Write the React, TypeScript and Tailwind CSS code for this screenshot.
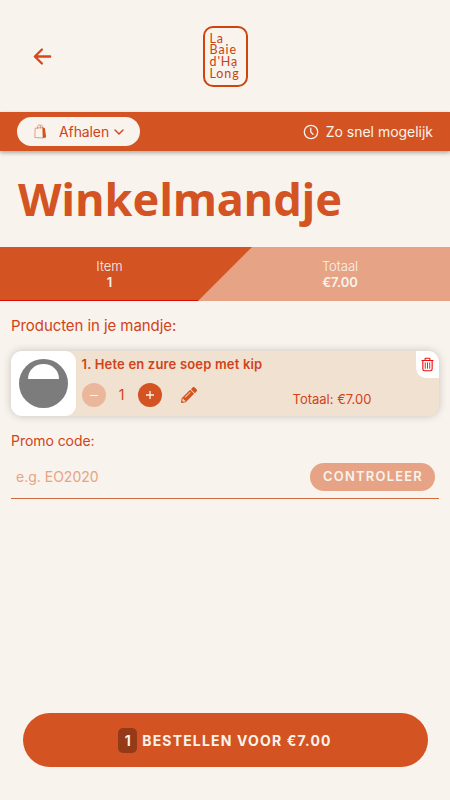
import { useState } from 'react';
import { IoArrowBack } from 'react-icons/io5';
import { FaPencilAlt } from 'react-icons/fa';

const formatPrice = (value: number) => `€${value.toFixed(2)}`;

function Logo() {
  return (
    <div className="w-[45px] h-[61px] rounded-[10px] border-2 border-[#cd440c] pl-[5px] pt-[5px] font-['Lato',sans-serif] text-[12.5px] leading-[11.9px] tracking-[0.9px] text-[#c9430f] whitespace-pre-line">
      {"La\nBaie\nd'Hạ\nLong"}
    </div>
  );
}

function BagIcon() {
  return (
    <svg className="w-[13px] h-[15px]" viewBox="0 0 13 15" fill="none">
      <path d="M1.2 4.2L9 3.5V14L0.8 13.5Z" stroke="#d98a6c" strokeWidth={0.8} />
      <path d="M8.5 3.5L10.8 4L12.2 13.2L9 14.2Z" fill="#d4511f" />
      <path d="M3.6 5V3C3.6 0.6 6.2 0.2 6.6 2.8V4.6M6 2C6.6 0.2 8.8 0.8 8.8 3.4" stroke="#d98a6c" strokeWidth={0.8} />
    </svg>
  );
}

function ClockIcon() {
  return (
    <svg className="w-4 h-4" viewBox="0 0 16 16" fill="none" stroke="currentColor" strokeWidth={1.3} strokeLinecap="round" strokeLinejoin="round">
      <circle cx="8" cy="8" r="6.7" />
      <path d="M7.8 4.2V8L10 10.2" />
    </svg>
  );
}

function TrashIcon() {
  return (
    <svg className="w-[13px] h-[15px]" viewBox="0 0 14 15" fill="none" stroke="#f20d0d" strokeWidth={1.2} strokeLinecap="round">
      <path d="M1 3.2H13M4.4 3V1.6C4.4 1.1 4.7 0.8 5.2 0.8H8.8C9.3 0.8 9.6 1.1 9.6 1.6V3" />
      <path d="M2 3.4V12.4C2 13.5 2.6 14.2 3.7 14.2H10.3C11.4 14.2 12 13.5 12 12.4V3.4" />
      <path d="M4.6 5.7V11.6M7 5.7V11.6M9.4 5.7V11.6" strokeWidth={1} />
    </svg>
  );
}

export default function App() {
  const [count, setCount] = useState(1);
  const [promo, setPromo] = useState('');
  const total = formatPrice(count * 7);

  return (
    <div className="flex flex-col w-full h-screen overflow-hidden bg-[#f8f3ec] text-[#d1431a] font-['Inter',sans-serif]">
      <header className="grid grid-cols-3 items-center h-28 shrink-0">
        <button className="ml-[30px] w-fit text-[#d4481a]">
          <IoArrowBack className="w-[25px] h-[25px]" />
        </button>
        <div className="justify-self-center">
          <Logo />
        </div>
      </header>

      <div className="flex items-center justify-between h-[39px] shrink-0 bg-[#d45322] px-[17px] shadow-[0_2px_4px_rgba(0,0,0,0.3)]">
        <button className="flex items-center h-[29px] w-[123px] rounded-full bg-[#f8f3ec] pl-[17px]">
          <BagIcon />
          <span className="ml-3 text-sm tracking-[-0.1px]">Afhalen</span>
          <svg className="ml-[5px] w-[10px] h-[6px]" viewBox="0 0 10 6" fill="none" stroke="currentColor" strokeWidth={1.4} strokeLinecap="round" strokeLinejoin="round">
            <path d="M1 1L5 5L9 1" />
          </svg>
        </button>
        <div className="flex items-center gap-[7px] text-[#f8f3ec]">
          <ClockIcon />
          <span className="text-sm tracking-[-0.02px]">Zo snel mogelijk</span>
        </div>
      </div>

      <h1 className="h-24 shrink-0 pl-[18px] pt-[17px] font-['Noto_Sans',sans-serif] text-[45px] leading-[62px] tracking-[0.08px] font-bold text-[#d45322]">
        Winkelmandje
      </h1>

      <div className="relative grid grid-cols-[219px_1fr] h-[54px] shrink-0 bg-[#e6a385] text-center text-[13px] leading-4 text-[#f8f3ec]">
        <svg className="absolute inset-0 w-[252px] h-[54px]" viewBox="0 0 252 54">
          <path d="M0 0H252L198 54H0Z" fill="#d45322" />
          <path d="M0 53.5H198" stroke="#d90d05" />
        </svg>
        <div className="relative pt-[11px]">
          <div className="font-light">Item</div>
          <div className="font-semibold">{count}</div>
        </div>
        <div className="relative pt-[11px] pl-[11px]">
          <div className="font-light">Totaal</div>
          <div className="font-semibold">{total}</div>
        </div>
      </div>

      <main className="flex flex-col flex-1 px-[11px]">
        <h2 className="mt-[15px] text-[15px] leading-5 tracking-[-0.07px]">Producten in je mandje:</h2>

        <div className="flex mt-[15px] h-[65px] shrink-0 rounded-[11px] bg-[#f1e1d0] shadow-[0_0_8px_rgba(0,0,0,0.2)]">
          <div className="flex items-center justify-center w-[65px] rounded-[11px] bg-white">
            <svg className="w-[49px] h-[49px]" viewBox="0 0 49 49">
              <circle cx="24.5" cy="24.5" r="24.5" fill="#7c7c7c" />
              <path d="M9 20C9 11 16 5 24.5 5S40 11 40 20Z" fill="#fff" />
            </svg>
          </div>
          <div className="flex-1 pl-[5.5px]">
            <div className="mt-[5px] text-[13px] leading-4 font-semibold tracking-[0.18px]">1. Hete en zure soep met kip</div>
            <div className="flex items-center mt-[9px]">
              <button
                className="w-6 h-6 rounded-full bg-[#eab69c] flex items-center justify-center"
                onClick={() => setCount(Math.max(1, count - 1))}
              >
                <span className="w-2 h-px bg-[#f8f3ec]" />
              </button>
              <span className="w-8 text-center text-sm -mt-px">{count}</span>
              <button
                className="w-6 h-6 rounded-full bg-[#d45322] flex items-center justify-center"
                onClick={() => setCount(count + 1)}
              >
                <svg className="w-2 h-2" viewBox="0 0 8 8" stroke="#f8f3ec" strokeWidth={1.3}>
                  <path d="M0 4H8M4 0V8" />
                </svg>
              </button>
              <FaPencilAlt className="ml-[19px] w-4 h-4 text-[#d45322]" />
              <span className="ml-[96px] mt-[9px] text-[13px]">Totaal: {total}</span>
            </div>
          </div>
          <button className="flex items-center justify-center w-[23px] h-[27px] rounded-tr-[11px] rounded-bl-[10px] bg-white">
            <TrashIcon />
          </button>
        </div>

        <label className="mt-[15px] text-sm leading-5 tracking-[-0.05px]">Promo code:</label>
        <div className="flex items-center mt-[6px] h-[42px] shrink-0 border-b border-[#d06a3c] pb-[2px]">
          <input
            className="flex-1 min-w-0 pl-[5px] text-sm outline-none placeholder:text-[#e6a385]"
            placeholder="e.g. EO2020"
            value={promo}
            onChange={(e) => setPromo(e.target.value)}
          />
          <button className="mr-1 w-[125px] h-7 rounded-full bg-[#e6a385] pl-px text-[13px] font-semibold tracking-[1.2px] text-[#f8f3ec]">
            CONTROLEER
          </button>
        </div>
      </main>

      <button className="flex items-center justify-center gap-[5px] mx-[22.5px] mb-[33px] h-[54px] shrink-0 rounded-full bg-[#d45322] text-sm font-bold tracking-[1.16px] text-[#f8f3ec]">
        <span className="w-[19px] h-[25px] leading-[25px] rounded-[5px] bg-[#953a18] text-center tracking-normal">{count}</span>
        <span className="pt-px">BESTELLEN VOOR {total}</span>
      </button>
    </div>
  );
}
